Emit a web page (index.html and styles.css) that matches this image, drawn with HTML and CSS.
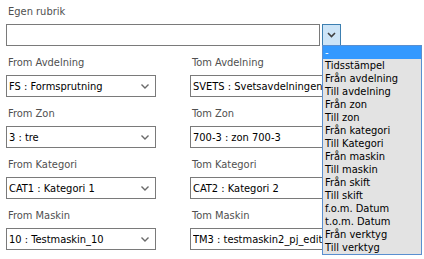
FILE: index.html
```html
<!DOCTYPE html>
<html>
<head>
<meta charset="utf-8">
<link rel="stylesheet" href="styles.css">
</head>
<body>
<div class="page">
  <div class="field">
    <div class="label">Egen rubrik</div>
    <div class="combo">
      <div class="textbox"></div>
      <div class="dropbtn"><svg width="9" height="6" viewBox="0 0 9 6"><path d="M1 1 L4.5 4.5 L8 1" fill="none" stroke="#404040" stroke-width="1.6"/></svg></div>
    </div>
  </div>
  <div class="grid">
    <div class="field"><div class="label">From Avdelning</div><div class="select"><span class="val">FS : Formsprutning</span><svg class="chev" width="8" height="5" viewBox="0 0 8 5"><path d="M0.5 0.5 L4 4 L7.5 0.5" fill="none" stroke="#6a6a6a" stroke-width="1.4"/></svg></div></div>
    <div class="field"><div class="label">Tom Avdelning</div><div class="select wide"><span class="val">SVETS : Svetsavdelningen</span></div></div>
    <div class="field"><div class="label">From Zon</div><div class="select"><span class="val">3 : tre</span><svg class="chev" width="8" height="5" viewBox="0 0 8 5"><path d="M0.5 0.5 L4 4 L7.5 0.5" fill="none" stroke="#6a6a6a" stroke-width="1.4"/></svg></div></div>
    <div class="field"><div class="label">Tom Zon</div><div class="select wide"><span class="val">700-3 : zon 700-3</span></div></div>
    <div class="field"><div class="label">From Kategori</div><div class="select"><span class="val">CAT1 : Kategori 1</span><svg class="chev" width="8" height="5" viewBox="0 0 8 5"><path d="M0.5 0.5 L4 4 L7.5 0.5" fill="none" stroke="#6a6a6a" stroke-width="1.4"/></svg></div></div>
    <div class="field"><div class="label">Tom Kategori</div><div class="select wide"><span class="val">CAT2 : Kategori 2</span></div></div>
    <div class="field"><div class="label">From Maskin</div><div class="select"><span class="val">10 : Testmaskin_10</span><svg class="chev" width="8" height="5" viewBox="0 0 8 5"><path d="M0.5 0.5 L4 4 L7.5 0.5" fill="none" stroke="#6a6a6a" stroke-width="1.4"/></svg></div></div>
    <div class="field"><div class="label">Tom Maskin</div><div class="select wide"><span class="val">TM3 : testmaskin2_pj_edit</span></div></div>
    <div class="field"><div class="label">From Skift</div><div class="select"><span class="val"></span></div></div>
    <div class="field"><div class="label">Tom Skift</div><div class="select wide"><span class="val"></span></div></div>
  </div>
  <ul class="popup">
    <li class="sel">-</li>
    <li>Tidsstämpel</li>
    <li>Från avdelning</li>
    <li>Till avdelning</li>
    <li>Från zon</li>
    <li>Till zon</li>
    <li>Från kategori</li>
    <li>Till Kategori</li>
    <li>Från maskin</li>
    <li>Till maskin</li>
    <li>Från skift</li>
    <li>Till skift</li>
    <li>f.o.m. Datum</li>
    <li>t.o.m. Datum</li>
    <li>Från verktyg</li>
    <li>Till verktyg</li>
  </ul>
</div>
</body>
</html>
```
FILE: styles.css
```css
html, body {
  margin: 0;
  padding: 0;
  background: #ffffff;
  overflow: hidden;
}
.page {
  position: relative;
  width: 424px;
  height: 259px;
  padding: 4px 0 0 6px;
  box-sizing: border-box;
  font-family: "DejaVu Sans Condensed", "DejaVu Sans", sans-serif;
  font-stretch: condensed;
  font-size: 11px;
  color: #000;
}
.label {
  height: 16px;
  line-height: 16px;
  margin: 0 0 4px 2px;
  color: #505050;
  white-space: nowrap;
}
.combo {
  display: flex;
  gap: 2px;
}
.textbox {
  width: 314px;
  height: 22px;
  box-sizing: border-box;
  border: 1px solid #7a7a7a;
  background: #fff;
}
.dropbtn {
  width: 19px;
  height: 22px;
  box-sizing: border-box;
  border: 1px solid #3c7fb1;
  background: #cce4f7;
  display: flex;
  align-items: center;
  justify-content: center;
}
.grid {
  display: grid;
  grid-template-columns: 150px 150px;
  column-gap: 34px;
  row-gap: 9px;
  margin-top: 9px;
}
.select {
  height: 22px;
  box-sizing: border-box;
  border: 1px solid #7a7a7a;
  background: #fff;
  display: flex;
  align-items: center;
  padding: 0 6px 0 2px;
  overflow: hidden;
  white-space: nowrap;
}
.select.wide {
  padding-right: 0;
}
.val {
  flex: 1 1 auto;
  overflow: hidden;
}
.chev {
  flex: none;
  margin-left: 4px;
}
.popup {
  position: absolute;
  left: 322px;
  top: 45px;
  width: 98px;
  margin: 0;
  padding: 0;
  list-style: none;
  border: 1px solid #5a8fd0;
  background: #e3e3e3;
}
.popup li {
  height: 13px;
  line-height: 13px;
  padding-left: 2px;
  white-space: nowrap;
  color: #000;
}
.popup li.sel {
  background: #3399ff;
  color: #fff;
}
```
